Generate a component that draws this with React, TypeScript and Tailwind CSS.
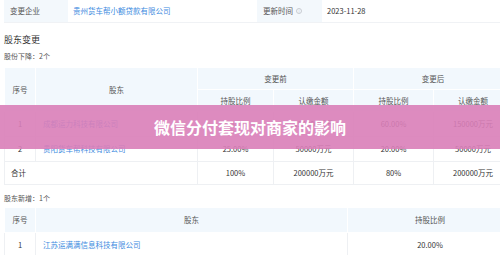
import React from "react";

const font = { fontFamily: '"Noto Sans CJK SC", "Noto Sans", sans-serif' };

export default function App() {
  return (
    <div className="relative w-[500px] h-[255px] overflow-hidden bg-white text-[7.5px] text-[#333]" style={font}>
      <div className="w-[508px] pl-[4px]">
        {/* 基本信息 */}
        <div className="flex h-[23px] items-center border-b border-[#f0f2f5]">
          <div className="w-[64px] h-full flex items-center pl-[6px] bg-[#f3f8fc] text-[#555]">变更企业</div>
          <div className="w-[189px] h-full flex items-center pl-[5px] text-[#3d8be0]">贵州货车帮小额贷款有限公司</div>
          <div className="w-[65px] h-full flex items-center pl-[6px] bg-[#f3f8fc] text-[#555] gap-[3px]">
            更新时间
            <span className="inline-flex w-[6px] h-[6px] rounded-full border border-[#c8ccd2] items-center justify-center text-[4px] text-[#c8ccd2] leading-none">i</span>
          </div>
          <div className="flex-1 h-full flex items-center pl-[5px]">2023-11-28</div>
        </div>

        <div className="mt-[9px] h-[16px] flex items-center text-[9px] text-[#333]">股东变更</div>
        <div className="mt-[2px] h-[12px] flex items-center text-[7px] text-[#555]">股份下降：2个</div>

        <table className="mt-[5px] w-[508px] table-fixed border-collapse text-center">
          <colgroup>
            <col className="w-[31px]" />
            <col className="w-[162px]" />
            <col className="w-[76px]" />
            <col className="w-[80px]" />
            <col className="w-[80px]" />
            <col className="w-[79px]" />
          </colgroup>
          <thead className="bg-[#f2f8fd] text-[#555]">
            <tr className="h-[22px]">
              <th rowSpan={2} className="font-normal border border-white">序号</th>
              <th rowSpan={2} className="font-normal border border-white">股东</th>
              <th colSpan={2} className="font-normal border border-white">变更前</th>
              <th colSpan={2} className="font-normal border border-white">变更后</th>
            </tr>
            <tr className="h-[22px]">
              <th className="font-normal border border-white">持股比例</th>
              <th className="font-normal border border-white">认缴金额</th>
              <th className="font-normal border border-white">持股比例</th>
              <th className="font-normal border border-white">认缴金额</th>
            </tr>
          </thead>
          <tbody>
            <tr className="h-[25px]">
              <td className="border border-[#eef0f3]">1</td>
              <td className="border border-[#eef0f3] text-left pl-[7px] text-[#3d8be0]">成都运力科技有限公司</td>
              <td className="border border-[#eef0f3]">75.00%</td>
              <td className="border border-[#eef0f3]">150000万元</td>
              <td className="border border-[#eef0f3]">60.00%</td>
              <td className="border border-[#eef0f3]">150000万元</td>
            </tr>
            <tr className="h-[25px]">
              <td className="border border-[#eef0f3]">2</td>
              <td className="border border-[#eef0f3] text-left pl-[7px] text-[#3d8be0]">贵阳货车帮科技有限公司</td>
              <td className="border border-[#eef0f3]">25.00%</td>
              <td className="border border-[#eef0f3]">50000万元</td>
              <td className="border border-[#eef0f3]">20.00%</td>
              <td className="border border-[#eef0f3]">50000万元</td>
            </tr>
            <tr className="h-[23px]">
              <td colSpan={2} className="border border-[#eef0f3] text-left pl-[6px]">合计</td>
              <td className="border border-[#eef0f3]">100%</td>
              <td className="border border-[#eef0f3]">200000万元</td>
              <td className="border border-[#eef0f3]">80%</td>
              <td className="border border-[#eef0f3]">200000万元</td>
            </tr>
          </tbody>
        </table>

        <div className="mt-[7px] h-[12px] flex items-center text-[7px] text-[#555]">股东新增：1个</div>

        <table className="mt-[3px] w-[508px] table-fixed border-collapse text-center">
          <colgroup>
            <col className="w-[31px]" />
            <col className="w-[312px]" />
            <col className="w-[165px]" />
          </colgroup>
          <thead className="bg-[#f2f8fd] text-[#555]">
            <tr className="h-[25px]">
              <th className="font-normal border border-white">序号</th>
              <th className="font-normal border border-white">股东</th>
              <th className="font-normal border border-white">持股比例</th>
            </tr>
          </thead>
          <tbody>
            <tr className="h-[24px]">
              <td className="border border-[#eef0f3]">1</td>
              <td className="border border-[#eef0f3] text-left pl-[7px] text-[#3d8be0]">江苏运满满信息科技有限公司</td>
              <td className="border border-[#eef0f3]">20.00%</td>
            </tr>
          </tbody>
        </table>
      </div>

      {/* 标题横幅 */}
      <div className="absolute left-0 right-0 top-[105px] h-[44px] bg-[#d97eb8]/90 flex items-center justify-center">
        <span className="text-white font-bold text-[16px] tracking-[0px]">微信分付套现对商家的影响</span>
      </div>
    </div>
  );
}
